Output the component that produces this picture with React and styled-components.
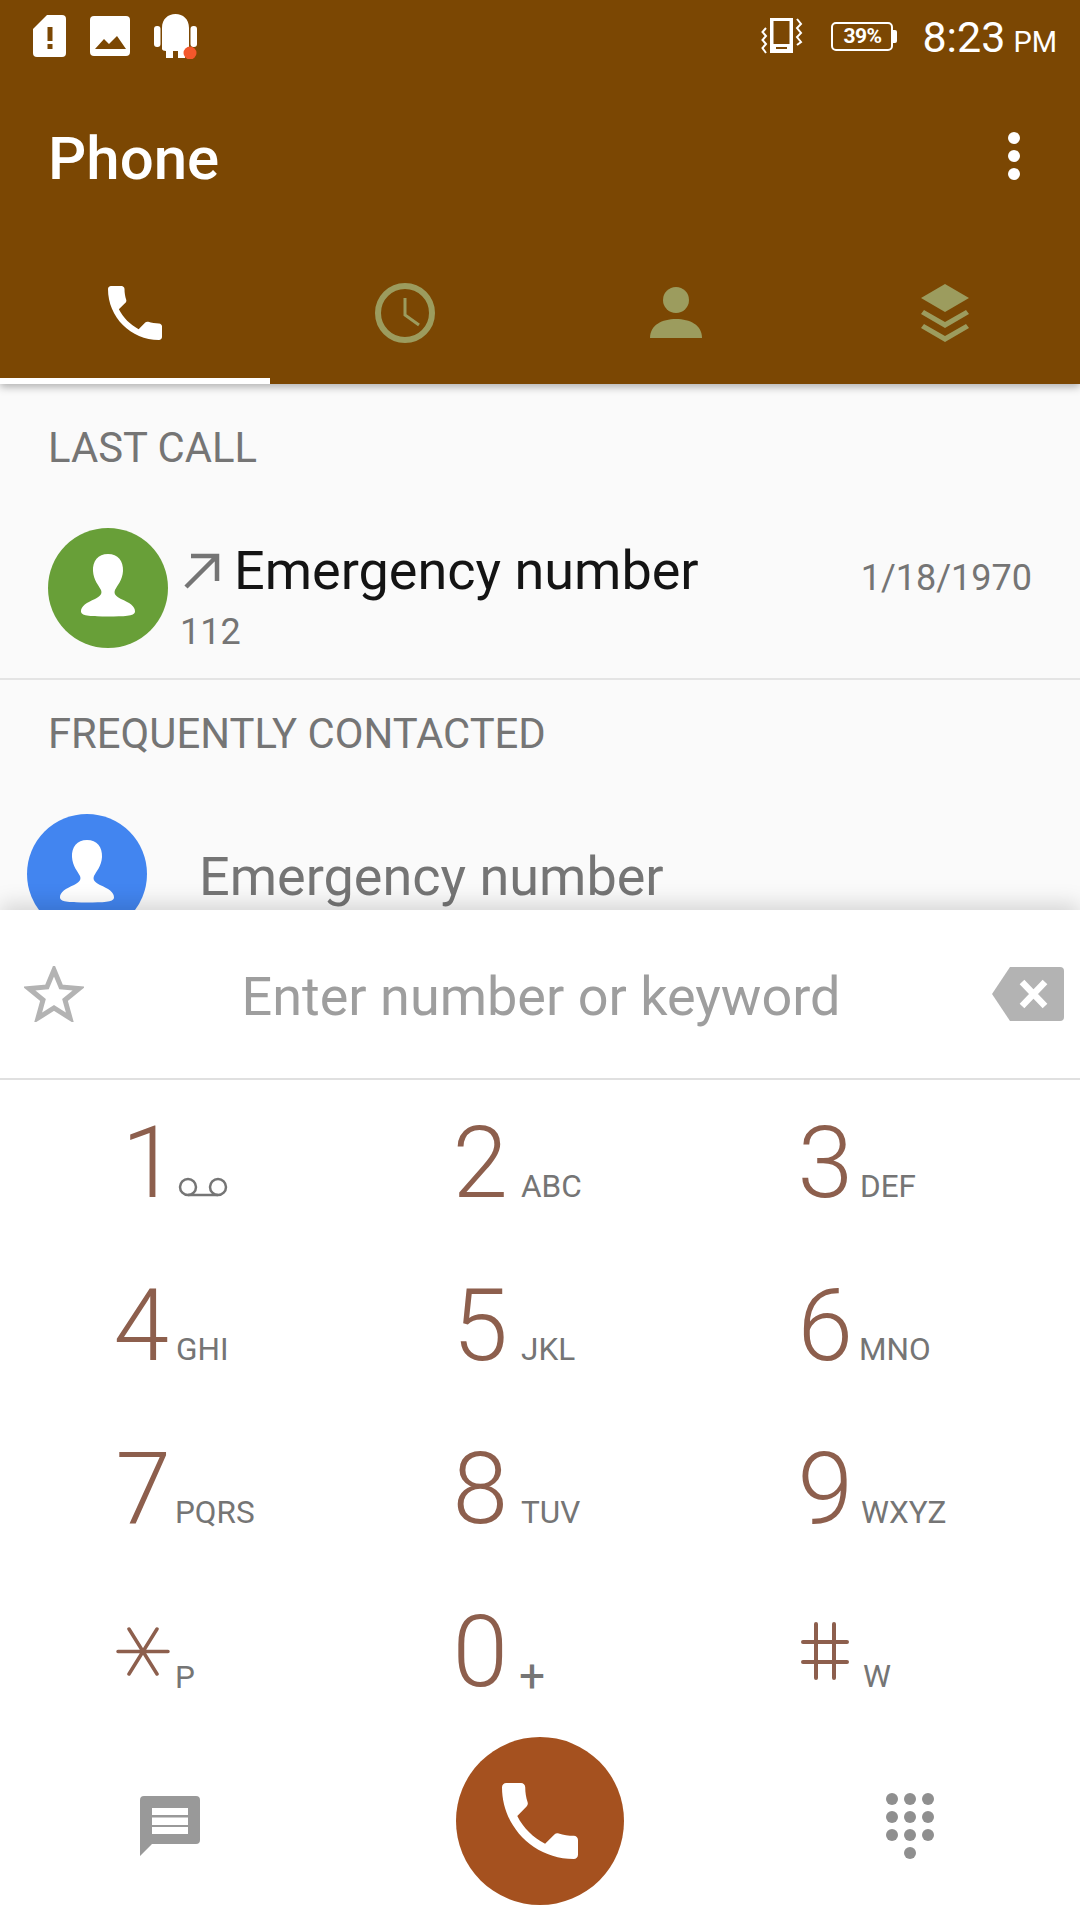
import styled, { createGlobalStyle } from "styled-components";

const GlobalStyle = createGlobalStyle`
  html, body {
    margin: 0;
    padding: 0;
    background: #fafafa;
  }
  * {
    box-sizing: border-box;
  }
`;

const BROWN = "#7b4703";
const TAB_OFF = "#9c9c5e";
const PHONE_PATH =
  "M6.62 10.79c1.44 2.83 3.76 5.14 6.59 6.59l2.2-2.2c.27-.27.67-.36 1.02-.24 1.12.37 2.33.57 3.57.57.55 0 1 .45 1 1V20c0 .55-.45 1-1 1-9.39 0-17-7.61-17-17 0-.55.45-1 1-1h3.5c.55 0 1 .45 1 1 0 1.25.2 2.45.57 3.57.11.35.03.74-.25 1.02l-2.2 2.2z";
const AVATAR_PATH =
  "M60 26C50 26 44.500 33 45 43C45.500 52 51 58 53 62C54.500 66 52 68.500 47 71C39 74.500 32.500 78 33 84C33.500 88 44 88.500 60 88.500C76 88.500 86.500 88 87 84C87.500 78 81 74.500 73 71C68 68.500 65.500 66 67 62C69 58 74.500 52 75 43C75.500 33 70 26 60 26Z";

const Screen = styled.div`
  width: 1080px;
  height: 1920px;
  overflow: hidden;
  display: flex;
  flex-direction: column;
  font-family: Roboto, "Liberation Sans", sans-serif;
  background: #fafafa;
`;

const Header = styled.header`
  height: 384px;
  flex: none;
  background: ${BROWN};
  color: #fff;
  box-shadow: 0 3px 8px rgba(0, 0, 0, 0.3);
  position: relative;
  z-index: 2;
  display: flex;
  flex-direction: column;
`;

const StatusBar = styled.div`
  height: 72px;
  display: flex;
  align-items: center;
  padding: 0 23px 0 33px;
`;

const StatusLeft = styled.div`
  display: flex;
  align-items: center;
  gap: 24px;
  flex: 1;
`;

const Clock = styled.div`
  margin-left: 29px;
  padding-top: 7px;
  display: flex;
  align-items: baseline;
  font-size: 43px;
  line-height: 72px;
`;

const Meridiem = styled.span`
  font-size: 29px;
  margin-left: 8px;
`;

const Battery = styled.div`
  width: 62px;
  height: 29px;
  margin-left: 28px;
  position: relative;
  border: 2.500px solid #fff;
  border-radius: 5px;
  display: flex;
  align-items: center;
  justify-content: center;
  font-size: 21px;
  font-weight: 700;
  letter-spacing: -0.5px;
  &::after {
    content: "";
    position: absolute;
    right: -6px;
    top: 6px;
    width: 4px;
    height: 13px;
    background: #fff;
    border-radius: 0 2px 2px 0;
  }
`;

const ActionBar = styled.div`
  height: 172px;
  display: flex;
  align-items: center;
  justify-content: space-between;
  padding: 0 60px 0 48px;
  margin-bottom: 8px;
`;

const Title = styled.div`
  font-size: 60px;
  font-weight: 500;
`;

const Overflow = styled.div`
  display: flex;
  flex-direction: column;
  gap: 6px;
  margin-top: -4px;
  span {
    width: 12px;
    height: 12px;
    border-radius: 50%;
    background: #fff;
  }
`;

const Tabs = styled.div`
  flex: 1;
  display: grid;
  grid-template-columns: repeat(4, 1fr);
`;

const Tab = styled.div`
  display: flex;
  align-items: center;
  justify-content: center;
  padding-bottom: 4px;
  color: ${(props) => (props.$active ? "#fff" : TAB_OFF)};
  border-bottom: 6px solid ${(props) => (props.$active ? "#fff" : "transparent")};
`;

const List = styled.div`
  height: 526px;
  flex: none;
  overflow: hidden;
`;

const SectionTitle = styled.div`
  font-size: 41.8px;
  line-height: 44px;
  color: #757575;
  padding: ${(props) => props.$pad};
`;

const CallRow = styled.div`
  height: 152px;
  display: flex;
  padding: 0 48px;
  margin-top: 58px;
  border-bottom: 2px solid #e4e4e4;
`;

const Avatar = styled.div`
  width: 120px;
  height: 120px;
  flex: none;
  border-radius: 50%;
  background: ${(props) => props.$color};
  display: flex;
  align-items: center;
  justify-content: center;
`;

const CallText = styled.div`
  flex: 1;
  margin-left: 16px;
  padding-top: 8px;
`;

const CallName = styled.div`
  display: flex;
  align-items: center;
  gap: 14px;
  font-size: 54px;
  line-height: 70px;
  color: #141414;
`;

const CallNumber = styled.div`
  font-size: 36px;
  line-height: 44px;
  margin: 4px 0 0 -4px;
  color: #757575;
`;

const CallDate = styled.div`
  font-size: 36px;
  line-height: 100px;
  color: #757575;
`;

const ContactRow = styled.div`
  display: flex;
  align-items: center;
  padding-left: 27px;
  margin-top: 58px;
`;

const ContactName = styled.div`
  margin-left: 52px;
  padding-top: 4px;
  font-size: 54px;
  color: #757575;
`;

const Dialer = styled.div`
  flex: 1;
  background: #fff;
  position: relative;
  z-index: 1;
  box-shadow: 0 -6px 20px rgba(0, 0, 0, 0.15);
  display: flex;
  flex-direction: column;
`;

const NumberBar = styled.div`
  height: 170px;
  flex: none;
  border-bottom: 2px solid #e0e0e0;
  display: flex;
  align-items: center;
  padding: 0 16px 0 24px;
`;

const Placeholder = styled.div`
  flex: 1;
  text-align: center;
  font-size: 54px;
  padding: 4px 0 0 6px;
  color: #9e9e9e;
`;

const KeyGrid = styled.div`
  display: grid;
  grid-template-columns: repeat(3, 360px);
  grid-auto-rows: 163px;
  padding-top: 1px;
`;

const Key = styled.div`
  display: flex;
  align-items: baseline;
  padding-left: ${(props) => props.$left}px;
`;

const Digit = styled.div`
  width: 70px;
  flex: none;
  text-align: right;
  font-size: 100px;
  line-height: 163px;
  font-weight: 300;
  color: #8d5f4d;
`;

const KeyLabel = styled.div`
  margin-left: ${(props) => props.$gap}px;
  font-size: ${(props) => props.$size || 31.5}px;
  transform: translateY(${(props) => props.$drop || 0}px);
  color: #757575;
  line-height: 30px;
`;

const Footer = styled.div`
  flex: 1;
  display: grid;
  grid-template-columns: 1fr 168px 1fr;
  padding-top: 4px;
  align-items: start;
`;

const FooterLeft = styled.div`
  padding: 59px 0 0 140px;
`;

const FooterRight = styled.div`
  padding: 56px 0 0 262px;
`;

const CallButton = styled.div`
  width: 168px;
  height: 168px;
  border-radius: 50%;
  background: #a5511f;
  color: #fff;
  display: flex;
  align-items: center;
  justify-content: center;
`;

const Glyph = styled.svg`
  display: block;
  flex: none;
`;

const PersonGlyph = styled(Glyph)`
  margin-left: 2px;
`;

const InlineGlyph = styled.svg`
  display: inline-block;
  margin-bottom: ${(props) => props.$lift}px;
`;

const SimIcon = () => (
  <Glyph width="33" height="42" viewBox="0 0 33 42">
    <path d="M14 0H29a4 4 0 0 1 4 4V38a4 4 0 0 1-4 4H4a4 4 0 0 1-4-4V14Z" fill="#fff" />
    <rect x="14.500" y="12" width="5" height="14" fill={BROWN} />
    <rect x="14.500" y="29" width="5" height="5" fill={BROWN} />
  </Glyph>
);

const ImageIcon = () => (
  <Glyph width="40" height="40" viewBox="0 0 40 40">
    <rect width="40" height="40" rx="4" fill="#fff" />
    <path d="M5 33L14 23L19 28L27 20L36 33Z" fill={BROWN} />
  </Glyph>
);

const AndroidIcon = () => (
  <Glyph width="44" height="46" viewBox="0 0 44 46">
    <path
      d="M8 15C8 6 14 1 21.500 1S35 6 35 15V36C35 37 33 38 31 38V45H24V38H19V45H12V38C10 38 8 37 8 36Z"
      fill="#fff"
    />
    <rect x="0" y="13" width="6.500" height="21" rx="3" fill="#fff" />
    <rect x="36.500" y="13" width="6.500" height="21" rx="3" fill="#fff" />
    <circle cx="36" cy="40" r="6.500" fill="#f4572b" />
  </Glyph>
);

const VibrateIcon = () => (
  <Glyph width="42" height="36" viewBox="0 0 42 36">
    <path d="M9 0H32V35H9Z M12.500 3V26H28.500V3Z M15 29V31H26V29Z" fill="#fff" fillRule="evenodd" />
    <path
      d="M5 10L1.500 14L5 18L1.500 22L5 26L1.500 30L5 35"
      fill="none"
      stroke="#fff"
      strokeWidth="2"
    />
    <path
      d="M36 1L40 6L36 10L40 15L36 19L40 24L36 27"
      fill="none"
      stroke="#fff"
      strokeWidth="2"
    />
  </Glyph>
);

const DotsIcon = () => (
  <Overflow>
    <span />
    <span />
    <span />
  </Overflow>
);

const PhoneIcon = ({ size }) => (
  <Glyph width={size} height={size} viewBox="3 3 18 18">
    <path d={PHONE_PATH} fill="currentColor" />
  </Glyph>
);

const ClockIcon = () => (
  <Glyph width="60" height="60" viewBox="0 0 60 60">
    <circle cx="30" cy="30" r="27" fill="none" stroke="currentColor" strokeWidth="6" />
    <path d="M30 15V32L44 42" fill="none" stroke="currentColor" strokeWidth="3" />
  </Glyph>
);

const PersonIcon = () => (
  <PersonGlyph width="52" height="52" viewBox="0 0 52 52">
    <circle cx="26" cy="13" r="13" fill="currentColor" />
    <path d="M0 51C0 38 12 32 26 32S52 38 52 51Z" fill="currentColor" />
  </PersonGlyph>
);

const LayersIcon = () => (
  <Glyph width="48" height="58" viewBox="0 0 48 58">
    <path d="M24 0L48 14L24 28L0 14Z" fill="currentColor" />
    <path d="M0 30L3 26L24 38L45 26L48 30L24 44Z" fill="currentColor" />
    <path d="M0 44L3 40L24 52L45 40L48 44L24 58Z" fill="currentColor" />
  </Glyph>
);

const OutgoingArrow = () => (
  <Glyph width="36" height="36" viewBox="0 0 36 36">
    <path d="M2 34L33 3M7 3H33V28" fill="none" stroke="#757575" strokeWidth="4.500" />
  </Glyph>
);

const PersonAvatar = () => (
  <Glyph width="120" height="120" viewBox="0 0 120 120">
    <path d={AVATAR_PATH} fill="#fff" />
  </Glyph>
);

const StarIcon = () => (
  <Glyph width="60" height="56" viewBox="0 0 60 56">
    <path
      d="M30 4L37 21L55 22.500L41 34L46 52L30 42L14 52L19 34L5 22.500L23 21Z"
      fill="none"
      stroke="#b3b3b3"
      strokeWidth="5"
    />
  </Glyph>
);

const BackspaceIcon = () => (
  <Glyph width="72" height="54" viewBox="0 0 72 54">
    <path d="M18 0H68a4 4 0 0 1 4 4V50a4 4 0 0 1-4 4H18L0 27Z" fill="#b3b3b3" />
    <path d="M30 15L53 39M53 15L30 39" stroke="#fff" strokeWidth="6.500" />
  </Glyph>
);

const VoicemailIcon = () => (
  <Glyph width="50" height="20" viewBox="0 0 50 20">
    <circle cx="10" cy="10" r="8" fill="none" stroke="#757575" strokeWidth="2.500" />
    <circle cx="40" cy="10" r="8" fill="none" stroke="#757575" strokeWidth="2.500" />
    <path d="M10 18H40" stroke="#757575" strokeWidth="2.500" />
  </Glyph>
);

const StarKey = () => (
  <InlineGlyph $lift={10} width="54" height="49" viewBox="0 0 54 49" role="img" aria-label="*">
    <path
      d="M2 24.500H52M13 2L41 47M41 2L13 47"
      fill="none"
      stroke="#8d5f4d"
      strokeWidth="3.500"
      strokeLinecap="round"
    />
  </InlineGlyph>
);

const HashKey = () => (
  <InlineGlyph $lift={6} width="48" height="58" viewBox="0 0 48 58" role="img" aria-label="#">
    <path
      d="M15 2V56M33 2V56M2 20H46M2 40H46"
      fill="none"
      stroke="#8d5f4d"
      strokeWidth="4"
      strokeLinecap="round"
    />
  </InlineGlyph>
);

const MessageIcon = () => (
  <Glyph width="60" height="60" viewBox="0 0 60 60">
    <path
      d="M4 0H56a4 4 0 0 1 4 4V44a4 4 0 0 1-4 4H12L0 60V4a4 4 0 0 1 4-4Z"
      fill="#999"
    />
    <path d="M12 12H48V19H12ZM12 21.500H48V29H12ZM12 31H48V38H12Z" fill="#fff" />
  </Glyph>
);

const DialpadIcon = () => (
  <Glyph width="48" height="66" viewBox="0 0 48 66" fill="#8f8f8f">
    {[6, 24, 42].map((y) =>
      [6, 24, 42].map((x) => <circle key={`${x}-${y}`} cx={x} cy={y} r="6" />)
    )}
    <circle cx="24" cy="60" r="6" />
  </Glyph>
);

const KEYS = [
  { id: "1", digit: "1", label: <VoicemailIcon />, gap: 1, left: 107 },
  { id: "2", digit: "2", label: "ABC", gap: 13, left: 78 },
  { id: "3", digit: "3", label: "DEF", gap: 7, left: 63 },
  { id: "4", digit: "4", label: "GHI", gap: 7, left: 99 },
  { id: "5", digit: "5", label: "JKL", gap: 13, left: 78 },
  { id: "6", digit: "6", label: "MNO", gap: 6, left: 63 },
  { id: "7", digit: "7", label: "PQRS", gap: 4, left: 101 },
  { id: "8", digit: "8", label: "TUV", gap: 13, left: 78 },
  { id: "9", digit: "9", label: "WXYZ", gap: 8, left: 63 },
  { id: "star", digit: <StarKey />, label: "P", gap: 5, left: 100, drop: 2 },
  { id: "0", digit: "0", label: "+", gap: 11, left: 78, size: 46, drop: 6 },
  { id: "hash", digit: <HashKey />, label: "W", gap: 14, left: 59, drop: 1 },
];

const App = () => {
  return (
    <Screen>
      <GlobalStyle />
      <Header>
        <StatusBar>
          <StatusLeft>
            <SimIcon />
            <ImageIcon />
            <AndroidIcon />
          </StatusLeft>
          <VibrateIcon />
          <Battery>39%</Battery>
          <Clock>
            8:23<Meridiem>PM</Meridiem>
          </Clock>
        </StatusBar>
        <ActionBar>
          <Title>Phone</Title>
          <DotsIcon />
        </ActionBar>
        <Tabs>
          <Tab $active>
            <PhoneIcon size={54} />
          </Tab>
          <Tab>
            <ClockIcon />
          </Tab>
          <Tab>
            <PersonIcon />
          </Tab>
          <Tab>
            <LayersIcon />
          </Tab>
        </Tabs>
      </Header>
      <List>
        <SectionTitle $pad="42px 48px 0">LAST CALL</SectionTitle>
        <CallRow>
          <Avatar $color="#689f38">
            <PersonAvatar />
          </Avatar>
          <CallText>
            <CallName>
              <OutgoingArrow />
              Emergency number
            </CallName>
            <CallNumber>112</CallNumber>
          </CallText>
          <CallDate>1/18/1970</CallDate>
        </CallRow>
        <SectionTitle $pad="32px 48px 0">FREQUENTLY CONTACTED</SectionTitle>
        <ContactRow>
          <Avatar $color="#4285f0">
            <PersonAvatar />
          </Avatar>
          <ContactName>Emergency number</ContactName>
        </ContactRow>
      </List>
      <Dialer>
        <NumberBar>
          <StarIcon />
          <Placeholder>Enter number or keyword</Placeholder>
          <BackspaceIcon />
        </NumberBar>
        <KeyGrid>
          {KEYS.map((key) => (
            <Key key={key.id} $left={key.left}>
              <Digit>{key.digit}</Digit>
              <KeyLabel $gap={key.gap} $size={key.size} $drop={key.drop}>
                {key.label}
              </KeyLabel>
            </Key>
          ))}
        </KeyGrid>
        <Footer>
          <FooterLeft>
            <MessageIcon />
          </FooterLeft>
          <CallButton>
            <PhoneIcon size={76} />
          </CallButton>
          <FooterRight>
            <DialpadIcon />
          </FooterRight>
        </Footer>
      </Dialer>
    </Screen>
  );
};

export default App;
